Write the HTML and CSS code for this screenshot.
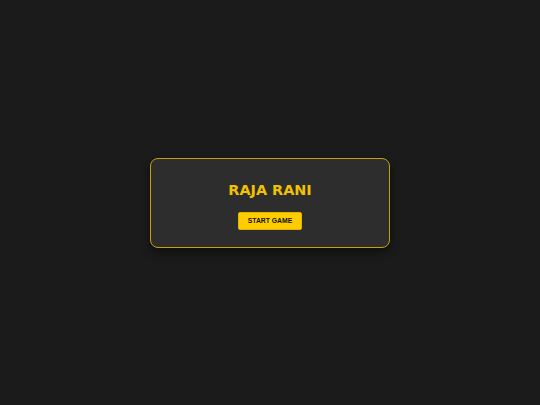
FILE: index.html
```html
<!DOCTYPE html>
<html>
<head>
<meta charset="utf-8">
<link rel="stylesheet" href="styles.css">
</head>
<body>
<div class="card">
  <h1 class="title">RAJA RANI</h1>
  <button class="start">START GAME</button>
</div>
</body>
</html>
```
FILE: styles.css
```css
html, body {
  margin: 0;
  padding: 0;
  background: #1b1b1b;
}
body {
  min-height: 100vh;
  display: flex;
  align-items: center;
  justify-content: center;
}
.card {
  width: 238px;
  box-sizing: content-box;
  padding: 23px 0 17px;
  background: #2d2d2d;
  border: 1px solid #c4a20c;
  border-radius: 8px;
  box-shadow: 0 4px 10px rgba(0, 0, 0, 0.5);
  display: flex;
  flex-direction: column;
  align-items: center;
  gap: 14px;
}
.title {
  margin: 0;
  font-family: "DejaVu Sans", sans-serif;
  font-weight: bold;
  font-size: 14.4px;
  line-height: 16px;
  color: #f2c200;
}
.start {
  width: 64px;
  height: 18px;
  padding: 0;
  border: 1px solid #e0b400;
  border-radius: 2px;
  background: #ffcc00;
  color: #111;
  font-family: "Liberation Sans", Arial, sans-serif;
  font-weight: bold;
  font-size: 6.8px;
  cursor: pointer;
}
```
